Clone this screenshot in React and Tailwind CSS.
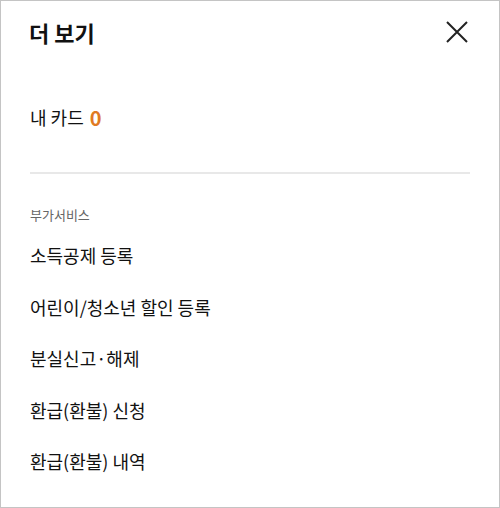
export default function App() {
  const items = ["소득공제 등록", "어린이/청소년 할인 등록", "분실신고·해제", "환급(환불) 신청", "환급(환불) 내역"];
  return (
    <div className="w-[500px] h-[508px] bg-white box-border border border-[#c4c4c4] overflow-hidden" style={{ fontFamily: '"Noto Sans CJK KR", "Noto Sans", sans-serif' }}>
      <div className="px-[29px]">
        <div className="flex items-center justify-between h-[62px]">
          <h1 className="text-[22px] font-bold text-[#111] leading-none -ml-[1px]">더 보기</h1>
          <svg width="24" height="24" viewBox="0 0 24 24" className="mr-[1px]">
            <path d="M2 2 L22 22 M22 2 L2 22" stroke="#222" strokeWidth="2" fill="none" />
          </svg>
        </div>
        <div className="h-[109px] flex items-center text-[18px] text-[#111]">
          <span>내 카드</span>
          <span className="ml-[6px] font-bold text-[#e07a22] text-[20px]">0</span>
        </div>
        <div className="border-t-2 border-[#e8e8e8]" />
        <div className="pt-[34px] text-[13px] text-[#666] leading-none">부가서비스</div>
        <ul className="mt-[9px]">
          {items.map((t) => (
            <li key={t} className="h-[51.5px] flex items-center text-[18px] text-[#111]">{t}</li>
          ))}
        </ul>
      </div>
    </div>
  );
}
